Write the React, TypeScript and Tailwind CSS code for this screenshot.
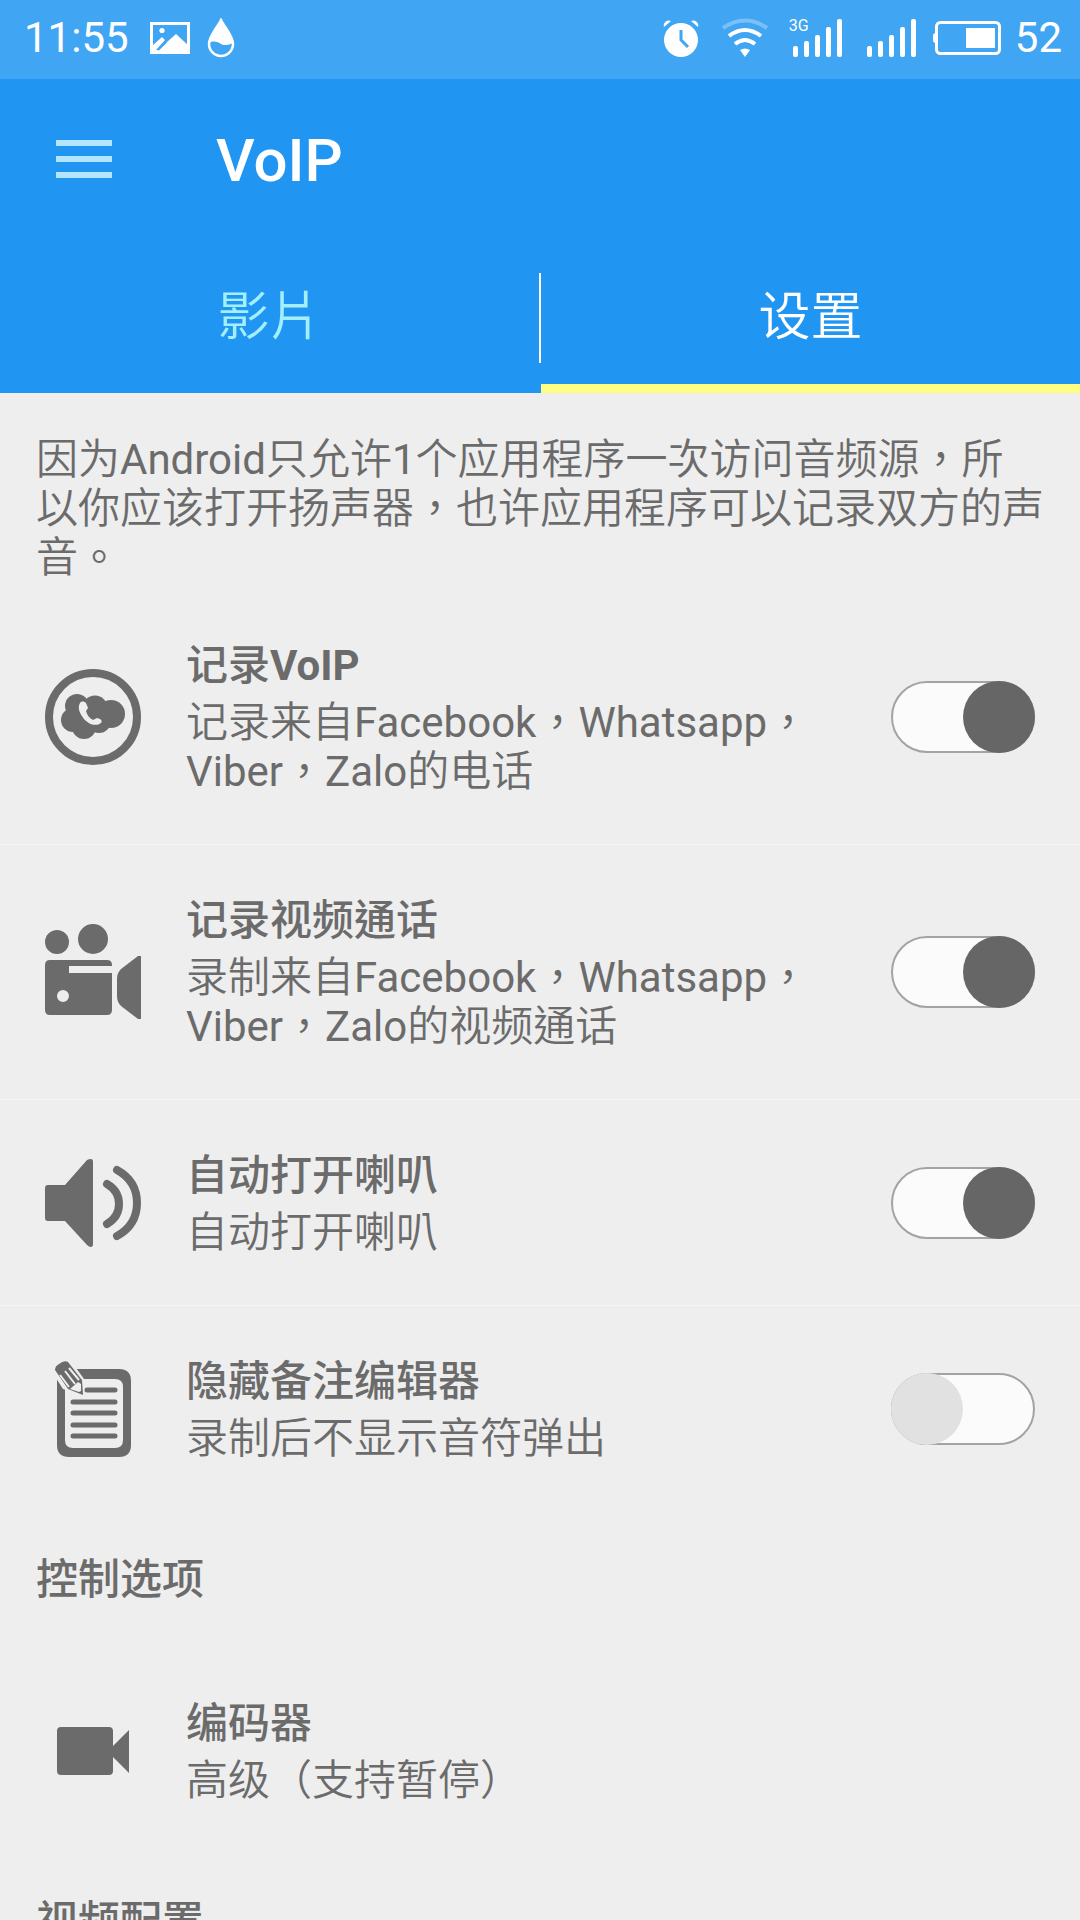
import React, { useId, useState } from 'react';

type IconProps = { className?: string };

function AlarmIcon() {
  return (
    <svg viewBox="0 0 36 38" className="h-[38px] w-9" aria-hidden="true">
      <circle cx="18" cy="21" r="17" fill="currentColor" />
      <path d="M1 8a5 5 0 0 1 7-6M28 2a5 5 0 0 1 7 6z" fill="currentColor" />
      <path d="M18 11v10l7 7" fill="none" stroke="#40a5f3" strokeWidth="3" />
    </svg>
  );
}

function WifiIcon() {
  return (
    <svg viewBox="0 0 48 40" className="h-10 w-12" aria-hidden="true">
      <g fill="none" stroke="currentColor" strokeWidth="4">
        <path d="M2 10q22-15 44 0" opacity="0.3" />
        <path d="M8 18q16-12 32 0" />
        <path d="M14 26q10-8 20 0" />
      </g>
      <path d="M19 32q5-3 10 0l-5 7z" fill="currentColor" />
    </svg>
  );
}

function SignalIcon() {
  return (
    <svg viewBox="0 0 50 40" className="h-10 w-[50px]" aria-hidden="true">
      <g fill="currentColor">
        <rect x="0" y="28" width="5" height="11" rx="2" />
        <rect x="11" y="23" width="5" height="16" rx="2" />
        <rect x="22" y="17" width="5" height="22" rx="2" />
        <rect x="33" y="9" width="5" height="30" rx="2" />
        <rect x="44" y="1" width="5" height="38" rx="2" />
      </g>
    </svg>
  );
}

function BatteryIcon() {
  return (
    <svg viewBox="0 0 68 34" className="h-[34px] w-[68px]" aria-hidden="true">
      <rect x="3.5" y="1.5" width="63" height="31" rx="4" fill="none" stroke="currentColor" strokeWidth="3" />
      <path d="M3 12q-3 0-3 3v4q0 3 3 3z" fill="currentColor" />
      <rect x="33" y="7" width="29" height="20" fill="currentColor" />
    </svg>
  );
}

function PictureIcon() {
  return (
    <svg viewBox="0 0 40 32" className="h-8 w-10" aria-hidden="true">
      <rect x="1.5" y="1.5" width="37" height="29" fill="none" stroke="currentColor" strokeWidth="3" />
      <circle cx="12" cy="8.5" r="2.6" fill="currentColor" />
      <path d="M2 24l10-9 3 3-9 10h2L26 12l13 12v7H2z" fill="currentColor" />
      <path d="M8 28l8-8" stroke="#40a5f3" strokeWidth="2" />
    </svg>
  );
}

function DropIcon() {
  return (
    <svg viewBox="0 0 28 40" className="h-10 w-7" aria-hidden="true">
      <path d="M14 2C10 10 2 18 2 26a12 12 0 0 0 24 0C26 18 18 10 14 2z" fill="none" stroke="currentColor" strokeWidth="2.5" />
      <path d="M14 2C10 10 2 18 2 25c5-3 9-1 12 1s8 1 12-1C26 18 18 10 14 2z" fill="currentColor" />
    </svg>
  );
}

function SkypeCallIcon({ className }: IconProps) {
  return (
    <svg viewBox="0 0 96 96" className={className} aria-hidden="true">
      <circle cx="48" cy="48" r="44" fill="none" stroke="currentColor" strokeWidth="8" />
      <g fill="currentColor">
        <circle cx="32" cy="37" r="12" />
        <circle cx="50" cy="39" r="12.5" />
        <circle cx="66" cy="45" r="14" />
        <circle cx="28" cy="51" r="12" />
        <circle cx="39" cy="58" r="12" />
        <circle cx="54" cy="52" r="12" />
      </g>
      <path
        d="M35 34c-3 5 0 11 4 16s12 8 17 4c1-1 1-3-1-4l-3-1-4 2c-4-2-6-5-7-9l2-3-2-5c-2-2-5-2-6 0z"
        fill="#eee"
      />
    </svg>
  );
}

function MovieCameraIcon({ className }: IconProps) {
  return (
    <svg viewBox="0 0 96 96" className={className} fill="currentColor" aria-hidden="true">
      <circle cx="12" cy="18" r="12" />
      <circle cx="48" cy="15" r="15" />
      <path d="M5 36h57q5 0 5 5v1H24v7h43v37q0 5-5 5H5q-5 0-5-5V41q0-5 5-5zm13 30a6 6 0 1 0 0 12 6 6 0 0 0 0-12z" />
      <path d="M96 32v63h-3L76 82q-4-4-4-10V55q0-6 4-10l17-13z" />
    </svg>
  );
}

function SpeakerIcon({ className }: IconProps) {
  return (
    <svg viewBox="0 0 96 96" className={className} aria-hidden="true">
      <path d="M3 30h17L42 5q2-1 4-1 2 0 2 3v82q0 3-2 3-2 0-4-2L20 66H3q-3 0-3-3V33q0-3 3-3z" fill="currentColor" />
      <g fill="none" stroke="currentColor" strokeWidth="8" strokeLinecap="round">
        <path d="M62 29q12 7 12 20t-12 20" />
        <path d="M72 15q20 11 20 33T72 81" />
      </g>
    </svg>
  );
}

function NoteIcon({ className }: IconProps) {
  return (
    <svg viewBox="0 0 96 96" className={className} aria-hidden="true">
      <path
        fillRule="evenodd"
        d="M24 8h50q12 0 12 12v64q0 12-12 12H24q-12 0-12-12V20Q12 8 24 8zm4 10q-8 0-8 8v53q0 8 8 8h42q8 0 8-8V26q0-8-8-8z"
        fill="currentColor"
      />
      <path d="M42 29h28M28 41h42M28 52h42M28 64h42M28 75h42" stroke="currentColor" strokeWidth="5" strokeLinecap="round" />
      <path d="M9 14L26 0l13 18v18L18 28z" fill="#eee" />
      <path d="M10 9q0-4 4-6 5-4 9-2l14 18 1 15-15-6z" fill="currentColor" />
      <path d="M15 14l9 12M20 10l10 13M24 7l10 12" stroke="#eee" strokeWidth="2" />
      <path d="M25 28l8-7 3 2 0 7-2 1z" fill="#eee" />
    </svg>
  );
}

function VideocamIcon({ className }: IconProps) {
  return (
    <svg viewBox="0 0 96 96" className={className} fill="currentColor" aria-hidden="true">
      <path d="M16 24h48q4 0 4 4v15l16-16v43L68 54v14q0 4-4 4H16q-4 0-4-4V28q0-4 4-4z" />
    </svg>
  );
}

function StatusBar() {
  return (
    <div className="flex h-[79px] shrink-0 items-center bg-[#40a5f3] pb-1 pl-5 pr-[18px] text-[42px] leading-none">
      <span className="pl-1">11:55</span>
      <div className="flex items-center gap-[17px] pl-[21px]">
        <PictureIcon />
        <DropIcon />
      </div>
      <div className="ml-auto flex items-center">
        <AlarmIcon />
        <div className="pl-[22px]">
          <WifiIcon />
        </div>
        <div className="relative ml-6">
          <SignalIcon />
          <span className="absolute -left-1 top-0 text-base leading-none">3G</span>
        </div>
        <div className="pl-6">
          <SignalIcon />
        </div>
        <div className="pl-4">
          <BatteryIcon />
        </div>
        <span className="pl-[14px]">52</span>
      </div>
    </div>
  );
}

interface TabProps {
  label: string;
  active: boolean;
  onClick: () => void;
}

function Tab({ label, active, onClick }: TabProps) {
  return (
    <button
      type="button"
      role="tab"
      aria-selected={active}
      onClick={onClick}
      className={`flex h-[151px] flex-1 items-center justify-center border-y-9 border-t-transparent font-['Roboto','Noto_Sans_CJK_TC_DemiLight','Noto_Sans_CJK_TC',sans-serif] text-[52px] leading-none ${
        active ? 'border-b-[#fffd82] text-white' : 'border-b-transparent text-[#a2effd]'
      }`}
    >
      {label}
    </button>
  );
}

interface SettingRowProps {
  icon: React.ReactNode;
  title: string;
  summary: string;
  divider?: boolean;
  defaultOn?: boolean;
}

function SettingRow({ icon, title, summary, divider, defaultOn }: SettingRowProps) {
  const id = useId();
  const hasSwitch = defaultOn !== undefined;

  const text = (
    <>
      <span className="block font-['Roboto','Noto_Sans_CJK_TC_Medium','Noto_Sans_CJK_TC',sans-serif] font-bold">{title}</span>
      <span className="mt-2 block">{summary}</span>
    </>
  );

  return (
    <li className={`flex items-center px-[45px] py-12 ${divider ? 'border-b border-[#f5f5f5]' : ''}`}>
      {icon}
      {hasSwitch ? (
        <>
          <label htmlFor={id} className="ml-[45px] mr-20 flex-1 pt-[3px]">
            {text}
          </label>
          <input
            id={id}
            type="checkbox"
            role="switch"
            defaultChecked={defaultOn}
            className="h-18 w-36 shrink-0 appearance-none rounded-full border-2 border-[#a3a3a3] bg-[#fbfbfb] before:-m-0.5 before:block before:size-18 before:rounded-full before:bg-[#e1e1e1] checked:before:translate-x-18 checked:before:bg-[#666]"
          />
        </>
      ) : (
        <button type="button" className="ml-[45px] flex-1 pt-[3px] text-left">
          {text}
        </button>
      )}
    </li>
  );
}

function SectionTitle({ children }: { children: React.ReactNode }) {
  return (
    <h2 className="px-9 py-11 font-['Roboto','Noto_Sans_CJK_TC_Medium','Noto_Sans_CJK_TC',sans-serif] font-medium">
      {children}
    </h2>
  );
}

export default function App() {
  const [tab, setTab] = useState<'video' | 'settings'>('settings');
  const iconClass = 'size-24 shrink-0';

  return (
    <div className="flex h-screen flex-col overflow-hidden bg-[#eee] font-['Roboto','Noto_Sans_CJK_TC',sans-serif] text-white">
      <StatusBar />

      <header className="shrink-0 bg-[#2095f2]">
        <div className="flex h-[163px] items-center px-14">
          <button type="button" aria-label="Menu" className="flex w-14 flex-col gap-[10px] pb-1">
            <span className="h-1.5 w-full bg-[#b3e5fc]" />
            <span className="h-1.5 w-full bg-[#b3e5fc]" />
            <span className="h-1.5 w-full bg-[#b3e5fc]" />
          </button>
          <h1 className="ml-[104px] text-[60px] font-medium leading-none">VoIP</h1>
        </div>
        <div role="tablist" className="flex items-center">
          <Tab label="影片" active={tab === 'video'} onClick={() => setTab('video')} />
          <span className="h-[90px] w-0.5 bg-white" />
          <Tab label="设置" active={tab === 'settings'} onClick={() => setTab('settings')} />
        </div>
      </header>

      <main className="flex-1 overflow-y-auto font-['Roboto','Noto_Sans_CJK_TC_DemiLight','Noto_Sans_CJK_TC',sans-serif] text-[42px] leading-[49px] text-[#6b6b6b] [scrollbar-width:none]">
        <p className="px-9 pb-2 pt-[42px]">
          因为Android只允许1个应用程序一次访问音频源，所以你应该打开扬声器，也许应用程序可以记录双方的声音。
        </p>

        <ul>
          <SettingRow
            icon={<SkypeCallIcon className={iconClass} />}
            title="记录VoIP"
            summary="记录来自Facebook，Whatsapp，Viber，Zalo的电话"
            divider
            defaultOn
          />
          <SettingRow
            icon={<MovieCameraIcon className={iconClass} />}
            title="记录视频通话"
            summary="录制来自Facebook，Whatsapp，Viber，Zalo的视频通话"
            divider
            defaultOn
          />
          <SettingRow
            icon={<SpeakerIcon className={iconClass} />}
            title="自动打开喇叭"
            summary="自动打开喇叭"
            divider
            defaultOn
          />
          <SettingRow
            icon={<NoteIcon className={iconClass} />}
            title="隐藏备注编辑器"
            summary="录制后不显示音符弹出"
            defaultOn={false}
          />
        </ul>

        <SectionTitle>控制选项</SectionTitle>
        <ul>
          <SettingRow icon={<VideocamIcon className={iconClass} />} title="编码器" summary="高级（支持暂停）" />
        </ul>

        <SectionTitle>视频配置</SectionTitle>
      </main>
    </div>
  );
}
